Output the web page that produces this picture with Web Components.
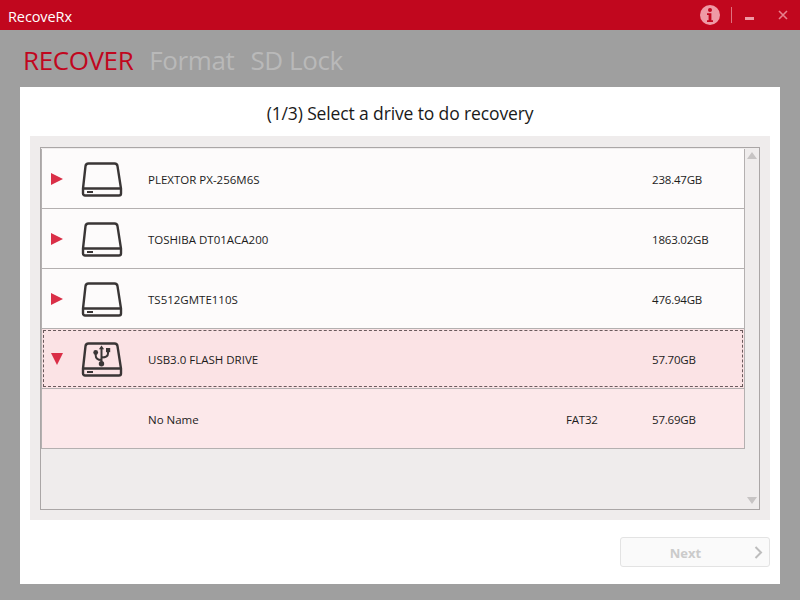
<!DOCTYPE html>
<html>
<head>
<meta charset="utf-8">
<title>RecoveRx</title>
<style>
   html, body { margin: 0; padding: 0; height: 100%; }
   body { background: #9f9f9f; overflow: hidden; font-family: "Open Sans", "Noto Sans", sans-serif; }
</style>
</head>
<body>
<app-window>
   <title-bar></title-bar>
   <nav-tabs></nav-tabs>
   <main-panel heading="(1/3) Select a drive to do recovery">
      <drive-list>
         <drive-row name="PLEXTOR PX-256M6S" size="238.47GB"></drive-row>
         <drive-row name="TOSHIBA DT01ACA200" size="1863.02GB"></drive-row>
         <drive-row name="TS512GMTE110S" size="476.94GB"></drive-row>
         <drive-row name="USB3.0 FLASH DRIVE" size="57.70GB" usb selected></drive-row>
         <drive-row name="No Name" fs="FAT32" size="57.69GB" partition></drive-row>
      </drive-list>
      <next-button slot="footer"></next-button>
   </main-panel>
</app-window>

<script>
const
   define = ( tagName, style, template, setup ) => {
      class Element extends HTMLElement {
         constructor() {
            super();
            let tag = document.createElement( "template" );
            tag.innerHTML = `<style>${ style }</style>${ template }`;
            this.attachShadow( { mode: "open" } );
            this.shadowRoot.append( tag.content.cloneNode( true ) );
            if ( setup ) setup( this, this.shadowRoot );
         }
      }
      customElements.define( tagName, Element );
   }
;

/* == [ window ] == */
define( "app-window", `
   :host { display: flex; flex-direction: column; width: 800px; height: 600px; }
`, `<slot></slot>` );

/* == [ title bar ] == */
define( "title-bar", `
   :host { display: flex; align-items: center; height: 30px; background: #c1071e; color: #fff; flex: none; }
   .name { margin-left: 8px; font-size: 14.5px; letter-spacing: -.1px; position: relative; top: 1px; }
   .tools { margin-left: auto; display: flex; align-items: center; }
   svg { display: block; }
   .info { margin-right: 11px; }
   .sep { width: 1px; height: 16px; background: #e0717e; margin-right: 13px; }
   .min { margin-right: 24px; position: relative; top: 3px; }
   .close { margin-right: 12px; }
`, `
   <span class="name">RecoveRx</span>
   <div class="tools">
      <svg class="info" width="20" height="20" viewBox="0 0 20 20">
         <circle cx="10" cy="10" r="10" fill="#ef9aa5"/>
         <circle cx="10" cy="5" r="2" fill="#c1071e"/>
         <path d="M7 8.3h4.4v7h1.6v1.6H7v-1.6h1.6V9.9H7z" fill="#c1071e"/>
      </svg>
      <span class="sep"></span>
      <svg class="min" width="9" height="3" viewBox="0 0 9 3"><rect width="9" height="3" fill="#ef9aa5"/></svg>
      <svg class="close" width="10" height="10" viewBox="0 0 10 10"><path d="M1 1l8 8M9 1l-8 8" stroke="#e8808d" stroke-width="1.6" fill="none"/></svg>
   </div>
` );

/* == [ tabs ] == */
define( "nav-tabs", `
   :host { display: flex; gap: 16px; height: 57px; padding: 9px 0 0 23px; box-sizing: border-box; flex: none;
      font-size: 26px; line-height: 42px; color: #b9b9b9; letter-spacing: -.4px; }
   .on { color: #c1071e; }
`, `<span class="on">RECOVER</span><span>Format</span><span>SD Lock</span>` );

/* == [ white panel ] == */
define( "main-panel", `
   :host { display: flex; flex-direction: column; width: 760px; height: 497px; margin-left: 20px; background: #fff; flex: none; }
   h1 { margin: 0; height: 49px; font-size: 17.5px; font-weight: 400; line-height: 52px; text-align: center; color: #1a1a1a; letter-spacing: -.13px; }
   .body { margin: 0 10px; height: 384px; box-sizing: border-box; padding: 11px 10px 10px; background: #efecec; }
   .foot { display: flex; justify-content: flex-end; padding: 17px 10px 0; }
`, `
   <h1></h1>
   <div class="body"><slot></slot></div>
   <div class="foot"><slot name="footer"></slot></div>
`, ( el, root ) => { root.querySelector( "h1" ).textContent = el.getAttribute( "heading" ); } );

/* == [ list box ] == */
define( "drive-list", `
   :host { display: flex; height: 363px; box-sizing: border-box; border: 1px solid #aaa6a6; }
   .rows { margin-top: 1px; align-self: flex-start; border: 1px solid #b4b0b0; border-top: 0; box-sizing: border-box; width: 704px; }
   .bar { flex: 1; display: flex; flex-direction: column; justify-content: space-between; align-items: center; padding: 4px 0 5px; }
   .bar svg { display: block; }
`, `
   <div class="rows"><slot></slot></div>
   <div class="bar">
      <svg width="10" height="7" viewBox="0 0 10 7"><path d="M5 0l5 7H0z" fill="#c7c4c4"/></svg>
      <svg width="10" height="7" viewBox="0 0 10 7"><path d="M5 7L0 0h10z" fill="#c7c4c4"/></svg>
   </div>
` );

/* == [ one drive ] == */
const
   diskBody = `<path d="M7.500 4.500h26a3 3 0 0 1 3 2.600l3.500 22.400v5a2 2 0 0 1-2 2H4a2 2 0 0 1-2-2v-5L4.500 7.100a3 3 0 0 1 3-2.600zM2 29.500h38" fill="none" stroke="#3a3636" stroke-width="2.400"/>
      <rect x="6" y="32" width="6" height="2" fill="#3a3636"/>`,
   usbMark = `<path d="M20.500 9v15M20.500 21c-4 0-5.800-2-5.800-4.500V14M20.500 18.500c4.500 0 6.500-1.500 6.500-4v-2" fill="none" stroke="#3a3636" stroke-width="2"/>
      <path d="M20.500 6.500l2.600 3.700h-5.200z" fill="#3a3636"/>
      <circle cx="14.700" cy="13.500" r="2.400" fill="#3a3636"/>
      <rect x="25" y="9" width="4.200" height="4.200" fill="#3a3636"/>
      <circle cx="20.500" cy="24.800" r="2.700" fill="#3a3636"/>`
;

define( "drive-row", `
   :host { display: block; height: 60px; box-sizing: border-box; background: #fdfbfb; color: #1c1c1c; font-size: 11.5px; border-bottom: 1px solid #b4b0b0; }
   :host(:last-child) { border-bottom: 0; height: 59px; }
   :host([selected]) { background: #fbe3e5; padding: 1px; }
   :host([partition]) { background: #fce8ea; }
   .row { display: grid; grid-template-columns: 106px 418px 86px 1fr; align-items: center; height: 100%; box-sizing: border-box; }
   :host([selected]) .row { outline: 1px dashed #6a5a5c; outline-offset: -1px; grid-template-columns: 105px 418px 86px 1fr; }
   .icons { display: flex; align-items: center; }
   .arrow { display: block; margin-left: 9px; width: 12px; height: 12px; }
   :host([selected]) .arrow { margin-left: 8px; }
   .disk { display: block; margin-left: 18px; }
   .fs, .name, .size { white-space: nowrap; position: relative; top: 1px; }
   .size, .fs { letter-spacing: -.2px; }
`, `
   <div class="row">
      <div class="icons"></div>
      <span class="name"></span>
      <span class="fs"></span>
      <span class="size"></span>
   </div>
`, ( el, root ) => {
   root.querySelector( ".name" ).textContent = el.getAttribute( "name" );
   root.querySelector( ".size" ).textContent = el.getAttribute( "size" );
   root.querySelector( ".fs" ).textContent = el.getAttribute( "fs" ) || "";
   if ( el.hasAttribute( "partition" ) ) return;
   let arrow = el.hasAttribute( "selected" ) ? "M0 0h12L6 12z" : "M0 0l12 6-12 6z";
   root.querySelector( ".icons" ).innerHTML = `
      <svg class="arrow" viewBox="0 0 12 12"><path d="${ arrow }" fill="#da2f47"/></svg>
      <svg class="disk" width="42" height="40" viewBox="0 0 42 40">${ diskBody }${ el.hasAttribute( "usb" ) ? usbMark : "" }</svg>`;
} );

/* == [ next button ] == */
define( "next-button", `
   :host { display: flex; align-items: center; width: 150px; height: 30px; box-sizing: border-box; border: 1px solid #e3e3e3; border-radius: 3px; background: #fafafa; position: relative; }
   span { flex: 1; text-align: center; font-size: 13px; font-weight: 700; color: #cbcbcb; padding-right: 19px; position: relative; top: 1px; }
   svg { position: absolute; right: 6px; top: 8px; }
`, `
   <span>Next</span>
   <svg width="9" height="13" viewBox="0 0 9 13"><path d="M1.500 1l5.500 5.500L1.500 12" fill="none" stroke="#bdbdbd" stroke-width="2"/></svg>
` );
</script>
</body>
</html>
